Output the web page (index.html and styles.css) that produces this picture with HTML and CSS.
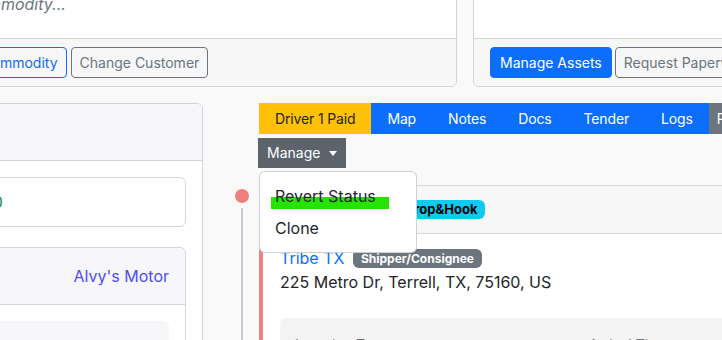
FILE: index.html
```html
<!DOCTYPE html>
<html lang="en">
<head>
  <meta charset="UTF-8">
  <meta name="viewport" content="width=device-width, initial-scale=1.0">
  <title>Load Details</title>
  <link rel="stylesheet" href="styles.css">
</head>
<body>
  <div class="page">
    <div class="top-row">
      <div class="card card-load">
        <div class="card-body">
          <span class="placeholder">Add commodity...</span>
        </div>
        <div class="card-footer">
          <button class="btn btn-outline-primary">Change Commodity</button>
          <button class="btn btn-outline-secondary">Change Customer</button>
        </div>
      </div>
      <div class="card card-assets">
        <div class="card-body"></div>
        <div class="card-footer">
          <button class="btn btn-primary">Manage Assets</button>
          <button class="btn btn-outline-secondary">Request Paperwork</button>
        </div>
      </div>
    </div>

    <div class="bottom-row">
      <aside class="side-card">
        <div class="side-header"></div>
        <div class="side-body">
          <div class="total-box">
            <span class="total">$2,450.00</span>
          </div>
          <div class="carrier-card">
            <div class="carrier-header">
              <span class="carrier-label">Carrier</span>
              <a href="#" class="carrier-link">Alvy's Motor</a>
            </div>
            <div class="carrier-body">
              <div class="carrier-box"></div>
            </div>
          </div>
        </div>
      </aside>

      <main class="main-col">
        <nav class="tabs">
          <a href="#" class="tab tab-warning">Driver 1 Paid</a>
          <a href="#" class="tab">Map</a>
          <a href="#" class="tab">Notes</a>
          <a href="#" class="tab">Docs</a>
          <a href="#" class="tab">Tender</a>
          <a href="#" class="tab">Logs</a>
          <a href="#" class="tab tab-secondary">Payments</a>
        </nav>

        <div class="manage-wrap">
          <button class="btn-manage">Manage</button>
          <div class="dropdown-menu">
            <a href="#" class="dropdown-item">
              <span class="highlight"></span>
              <span class="item-text">Revert Status</span>
            </a>
            <a href="#" class="dropdown-item">
              <span class="item-text">Clone</span>
            </a>
          </div>
        </div>

        <div class="stops">
          <div class="stop">
            <div class="rail">
              <span class="dot"></span>
              <span class="line"></span>
            </div>
            <div class="stop-card">
              <div class="stop-header">
                <span class="stop-title">Stop 1</span>
                <span class="badge badge-info">Drop&amp;Hook</span>
              </div>
              <div class="stop-body">
                <div class="stop-name">
                  <a href="#" class="location-link">Tribe TX</a>
                  <span class="badge badge-secondary">Shipper/Consignee</span>
                </div>
                <div class="address">225 Metro Dr, Terrell, TX, 75160, US</div>
                <div class="stop-details">
                  <span class="detail">Location Type</span>
                  <span class="detail">Arrival Time <span class="info-icon">i</span></span>
                </div>
              </div>
            </div>
          </div>
        </div>
      </main>
    </div>
  </div>
</body>
</html>
```

FILE: styles.css
```css
body {
  margin: 0;
  background-color: #f9f9fa;
  font-family: Inter, "Noto Sans", sans-serif;
  font-size: 16px;
  line-height: 1.5;
  color: #212529;
  overflow: hidden;
}
a {
  text-decoration: none;
}
.page {
  margin: -25px 0 0 -100px;
  width: 1100px;
}

/* top cards */
.top-row {
  display: flex;
  gap: 16px;
}
.card {
  background-color: white;
  border: 1px solid #d4d4d4;
  border-radius: 6px;
}
.card-load {
  width: 557px;
  box-sizing: border-box;
}
.card-assets {
  flex: 1;
}
.card-body {
  padding: 16px 16px 22px;
  height: 24px;
}
.placeholder {
  font-style: italic;
  color: #6c757d;
  padding-left: 16px;
}
.card-footer {
  background-color: #f7f7f7;
  border-top: 1px solid #d4d4d4;
  border-radius: 0 0 6px 6px;
  padding: 8px 16px;
  display: flex;
  gap: 4px;
}
.btn {
  font-family: Inter, "Noto Sans", sans-serif;
  font-size: 14px;
  line-height: 21px;
  padding: 4px 8px;
  border-radius: 4px;
  border: 1px solid;
  background: transparent;
  cursor: pointer;
}
.btn-outline-primary {
  color: #0d6efd;
  border-color: #0d6efd;
}
.btn-outline-secondary {
  color: #6c757d;
  border-color: #6c757d;
}
.btn-primary {
  background-color: #0d6efd;
  border-color: #0d6efd;
  color: white;
  padding: 4px 9px;
}
.card-assets .card-footer {
  gap: 3px;
}

/* bottom */
.bottom-row {
  display: flex;
  margin-top: 16px;
}
.side-card {
  width: 303px;
  box-sizing: border-box;
  background-color: white;
  border: 1px solid #d2d2dc;
  border-radius: 6px;
  height: 400px;
}
.side-header {
  height: 56px;
  background-color: #f7f7fb;
  border-bottom: 1px solid #d2d2dc;
  border-radius: 6px 6px 0 0;
}
.side-body {
  padding: 16px;
}
.total-box {
  border: 1px solid #d5d5dd;
  border-radius: 6px;
  padding: 12px 16px 12px 6px;
  background-color: white;
}
.total {
  color: #198754;
}
.carrier-card {
  margin-top: 20px;
  border: 1px solid #d5d5dd;
  border-radius: 6px;
}
.carrier-header {
  height: 56px;
  background-color: #f7f7fb;
  border-bottom: 1px solid #d5d5dd;
  border-radius: 6px 6px 0 0;
  padding: 0 16px;
  display: flex;
  align-items: center;
  justify-content: space-between;
}
.carrier-link {
  color: #4d4df2;
}
.carrier-body {
  padding: 16px;
}
.carrier-box {
  height: 80px;
  background-color: #f7f7fa;
  border-radius: 6px;
}

.main-col {
  flex: 1;
  margin-left: 25px;
}
.tabs {
  display: flex;
  margin-left: 31px;
}
.tab {
  font-size: 14px;
  line-height: 21px;
  letter-spacing: -0.15px;
  padding: 5px 16px;
  background-color: #0d6efd;
  color: white;
}
.tab-warning {
  background-color: #ffc107;
  color: #212529;
}
.tab-secondary {
  background-color: #6c757d;
  padding-left: 8px;
}
.manage-wrap {
  position: relative;
  margin: 4px 0 0 30px;
  width: fit-content;
}
.btn-manage {
  display: flex;
  align-items: center;
  font-family: Inter, "Noto Sans", sans-serif;
  font-size: 14px;
  line-height: 20px;
  padding: 5px 9px;
  border: none;
  background-color: #5c636a;
  color: white;
}
.btn-manage::after {
  content: "";
  margin-left: 9px;
  border-top: 5px solid white;
  border-left: 4px solid transparent;
  border-right: 4px solid transparent;
}
.dropdown-menu {
  position: absolute;
  top: 33px;
  left: 1px;
  width: 158px;
  box-sizing: border-box;
  padding: 8px 0;
  background-color: white;
  border: 1px solid rgba(0, 0, 0, 0.18);
  border-radius: 6px;
  z-index: 10;
}
.dropdown-item {
  display: block;
  position: relative;
  padding: 4px 15px;
  color: #212529;
}
.item-text {
  position: relative;
}
.highlight {
  position: absolute;
  left: 11px;
  top: 17px;
  width: 118px;
  height: 12px;
  background-color: #26e300;
}

.stops {
  margin-top: 17px;
}
.stop {
  display: flex;
}
.rail {
  width: 31px;
  flex-shrink: 0;
  display: flex;
  flex-direction: column;
}
.dot {
  width: 14px;
  height: 14px;
  margin: 4px 0 0 7px;
  border-radius: 50%;
  background-color: #f08080;
}
.line {
  width: 2px;
  margin: 5px 0 0 13px;
  flex: 1;
  background-color: #c8c8d4;
}
.stop-card {
  flex: 1;
  background-color: white;
  border: 1px solid #d6d6d6;
  border-left: 4px solid #f08080;
  border-radius: 6px;
}
.stop-header {
  display: flex;
  align-items: center;
  background-color: #f7f7f7;
  border-bottom: 1px solid #d6d6d6;
  padding: 12px 16px;
  line-height: 23px;
}
.stop-title {
  width: 110px;
  margin-right: 8px;
  font-weight: 600;
}
.badge {
  display: inline-block;
  font-size: 12px;
  font-weight: 700;
  line-height: 12px;
  padding: 4px 8px 3px;
  border-radius: 6px;
}
.badge-info {
  background-color: #0dcaf0;
  color: #000;
  font-size: 13px;
  line-height: 13px;
  padding: 3px 8px;
}
.badge-secondary {
  background-color: #6c757d;
  color: white;
  margin-left: 4px;
  vertical-align: 1px;
}
.stop-body {
  padding: 12px 16px 16px 17px;
}
.stop-name {
  line-height: 24px;
}
.location-link {
  color: #0d6efd;
  font-size: 16px;
}
.address {
  line-height: 24px;
}
.stop-details {
  margin-top: 24px;
  background-color: #f3f3f3;
  border-radius: 6px;
  padding: 16px 15px;
  display: flex;
  gap: 200px;
  font-size: 14px;
  color: #6c757d;
  height: 60px;
}
.info-icon {
  display: inline-block;
  width: 12px;
  height: 12px;
  margin-left: 24px;
  border: 1.5px solid #333;
  border-radius: 50%;
  font-size: 9px;
  line-height: 12px;
  text-align: center;
}
```
